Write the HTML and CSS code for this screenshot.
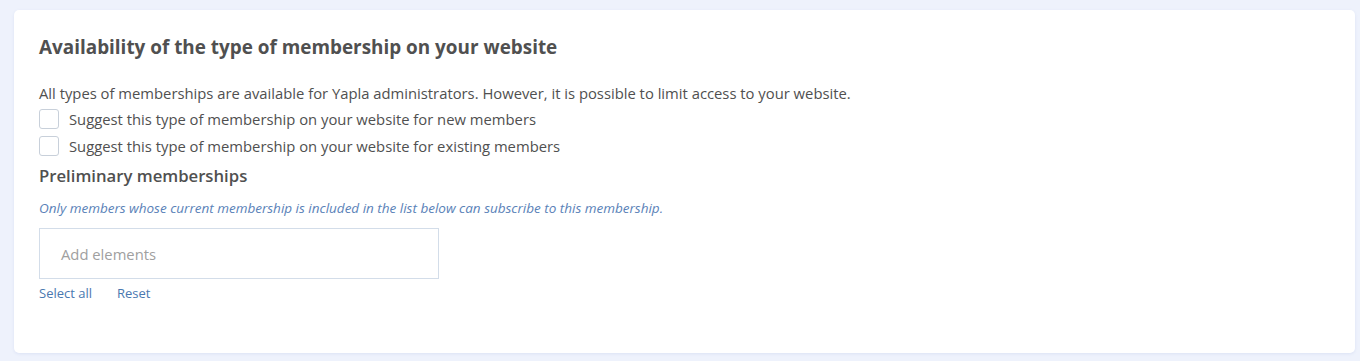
FILE: index.html
```html
<!DOCTYPE html>
<html lang="en">
    <head>
        <meta charset="UTF-8" />
        <meta name="viewport" content="width=device-width, initial-scale=1.0" />
        <title>Membership availability</title>
        <link rel="stylesheet" href="styles.css">
    </head>
    <body>
        <!-- 카드 -->
        <section class="card">
            <h2 class="ttl">Availability of the type of membership on your website</h2>

            <p class="desc">All types of memberships are available for Yapla administrators. However, it is possible to limit access to your website.</p>

            <label class="chk">
                <span class="box"></span>
                Suggest this type of membership on your website for new members
            </label>
            <label class="chk">
                <span class="box"></span>
                Suggest this type of membership on your website for existing members
            </label>

            <h3 class="sub">Preliminary memberships</h3>
            <p class="hint">Only members whose current membership is included in the list below can subscribe to this membership.</p>

            <div class="picker">Add elements</div>

            <div class="links">
                <a href="#">Select all</a>
                <a href="#">Reset</a>
            </div>
        </section>
    </body>
</html>
```

FILE: styles.css
```css
:root {
    --txt: #505050;
    --blue: #4a78b0;
    --line: #d3dde9;
}

body {
    margin: 0;
    padding: 10px 5px 8px 14px;
    background-color: #eef2fc;
    font-family: "Open Sans", "Noto Sans", sans-serif;
    color: var(--txt);
}

/* 카드 */
.card {
    height: 343px;
    box-sizing: border-box;
    padding: 25px 25px;
    background-color: #fff;
    border-radius: 5px;
    box-shadow: 0 1px 3px rgba(120, 140, 200, 0.15);
}

.ttl {
    margin: 0 0 24px;
    font-size: 18.9px;
    font-weight: 700;
    line-height: 24px;
}

.desc {
    margin: 0 0 6px;
    font-size: 14.8px;
    line-height: 20px;
}

.chk {
    display: flex;
    align-items: center;
    gap: 10px;
    height: 20px;
    margin-bottom: 7px;
    font-size: 14.8px;
}

.chk .box {
    width: 18px;
    height: 18px;
    border: 1px solid #c8d0da;
    border-radius: 3px;
}

.sub {
    margin: 10px 0 14px;
    font-size: 16.7px;
    font-weight: 600;
    line-height: 20px;
}

.hint {
    margin: 0 0 12px;
    font-size: 13.5px;
    line-height: 16px;
    font-style: italic;
    color: #5a82b8;
}

.picker {
    width: 377px;
    height: 49px;
    border: 1px solid var(--line);
    padding: 0 0 0 21px;
    display: flex;
    align-items: center;
    font-size: 14.8px;
    color: #a0a0a0;
}

.links {
    display: flex;
    gap: 25px;
    margin-top: 5px;
    font-size: 13px;
}

.links a {
    color: var(--blue);
    text-decoration: none;
}
```
